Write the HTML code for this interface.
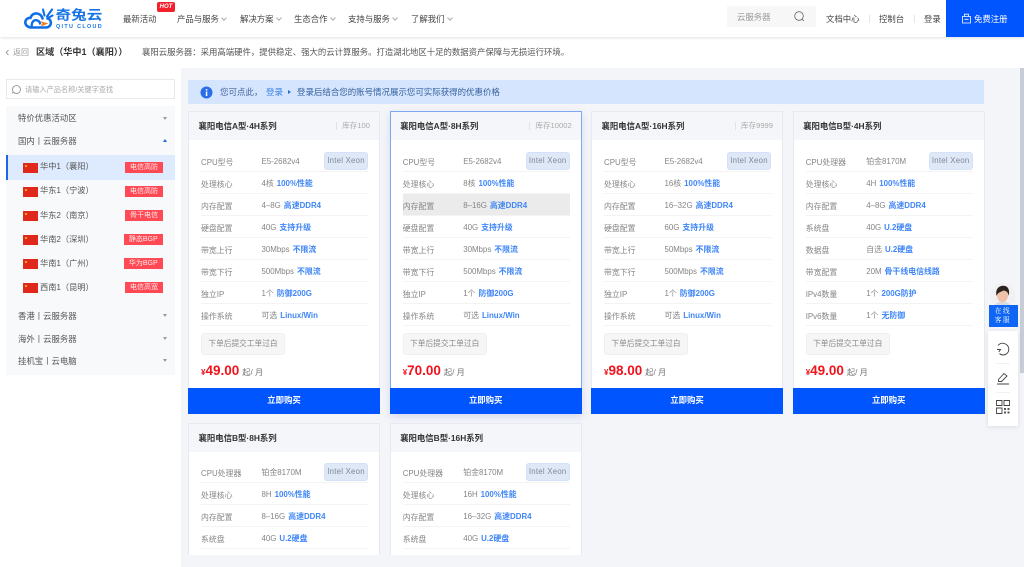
<!DOCTYPE html>
<html lang="zh-CN"><head><meta charset="utf-8"><title>奇兔云</title>
<style>
*{box-sizing:border-box;margin:0;padding:0}
html,body{width:1024px;height:567px;overflow:hidden;background:#fff}
body{font-family:"Liberation Sans","Noto Sans CJK SC",sans-serif;position:relative;color:#555;font-size:8px;filter:blur(.3px)}
.a{position:absolute;white-space:nowrap}
#hd{position:absolute;left:0;top:0;width:1024px;height:37px;background:#fff;box-shadow:0 1px 3px rgba(0,0,0,.12);z-index:5}
.nav{position:absolute;top:13px;font-size:8.4px;line-height:12px;color:#444;white-space:nowrap}
.chev{position:absolute;width:4px;height:4px;border-right:.7px solid #aaa;border-bottom:.7px solid #aaa;transform:rotate(45deg);top:16px}
#main{position:absolute;left:181px;top:68px;width:843px;height:499px;background:#f4f5f9;overflow:hidden}
#sb{position:absolute;left:1020px;top:68px;width:4px;height:305px;background:#c8ccd6}
#notice{position:absolute;left:7px;top:11.5px;width:796px;height:24.5px;background:#d5e5fd}
.card{position:absolute;width:192px;background:#fff;border:1px solid #e7e9f0}
.card.s{border-color:#7fa8f3;box-shadow:0 3px 8px rgba(70,100,180,.18)}
.head{position:absolute;left:0;top:0;width:100%;height:28px;background:#f5f6f9;font-size:8.4px;font-weight:700;line-height:28px;padding-left:9.5px;color:#333;white-space:nowrap}
.stock{position:absolute;right:9px;top:0;font-weight:400;font-size:7.6px;color:#aaa;line-height:28px;padding-left:6px}
.stock:before{content:"";position:absolute;left:0;top:10px;height:8px;border-left:1px solid #e2e2e2}
.rows{position:absolute;left:12px;width:167px}
.r{height:22px;border-bottom:1px solid #f3f3f3;line-height:23px;font-size:7.9px;color:#858585;white-space:nowrap;position:relative}
.r i{font-style:normal;display:inline-block;width:60.5px;position:relative;top:.6px}
.r b{font-weight:700;color:#3f86f7;margin-left:.8px}
.r.h{background:#ebebeb}
.chip{position:absolute;right:0;top:1.5px;width:44px;height:18px;background:#dfe8f7;border:1px solid #d3e1f9;border-radius:3px;text-align:center;line-height:16px;font-size:7.8px;color:#7f8898;font-weight:400;letter-spacing:.25px}
.note{position:absolute;left:12px;top:221px;width:84px;height:22px;background:#f6f6f6;border:1px solid #f0f0f0;border-radius:3px;text-align:center;line-height:20px;font-size:7.7px;color:#8a8a8a;white-space:nowrap}
.price{position:absolute;left:12px;top:249px;color:#f0121c;font-weight:700;font-size:13.5px;line-height:20px;white-space:nowrap}
.price small{font-size:8px;font-weight:700}
.price em{font-style:normal;font-weight:400;font-size:8.2px;color:#777;margin-left:3px;letter-spacing:0}
.buy{position:absolute;left:-1px;top:276px;width:192px;height:25.5px;background:#0055ff;color:#fff;text-align:center;line-height:25px;font-size:8.4px;font-weight:700}
#side{position:absolute;left:6px;top:106px;width:169px;height:269px;background:#f8f9fb}
.sec{position:absolute;left:18px;font-size:8.4px;line-height:12px;color:#555;white-space:nowrap}
.tri{position:absolute;left:163px;width:0;height:0;border-left:2.5px solid transparent;border-right:2.5px solid transparent;border-top:3px solid #999}
.flag{position:absolute;left:23px;width:15px;height:9.5px;background:#e0291b}
.flag:before{content:"";position:absolute;left:2px;top:1.5px;width:2px;height:2px;background:#f7d23c;border-radius:50%}
.reg{position:absolute;left:40px;font-size:8.2px;line-height:12px;color:#555;white-space:nowrap}
.bad{position:absolute;height:11px;background:#ff4a55;color:#fdeaea;font-size:7px;line-height:11px;text-align:center;white-space:nowrap}
</style></head><body>

<div id="hd">
<svg class="a" style="left:22px;top:7px" width="32" height="24" viewBox="0 0 32 24">
<path d="M10 20.500C5 20.500 3.300 17.500 3.300 15.500C3.300 12.500 6 10.500 8.500 10.800C9.500 7.500 12.500 6 15 6.500C18 7 20 9 20.500 11.500M10 20.500H24C27 20.500 29.300 18 28.800 15C28.400 13 27 11.800 25.500 11.500" fill="none" stroke="#0f6fe8" stroke-width="2.600" stroke-linecap="round"/>
<path d="M10 20.500C9 17 10.500 13.500 13.500 13.200C16 13 17.800 14.500 18.300 17.500" fill="none" stroke="#0f6fe8" stroke-width="2.300"/>
<path d="M22.500 8.500L21 2.500M25 9.500L30 2.500M26 11L30.500 8.500" fill="none" stroke="#0f6fe8" stroke-width="2.100" stroke-linecap="round"/>
<path d="M18 14L26.500 16.500L18.500 19.500L20.500 16.500Z" fill="#f47a20"/>
</svg>
<div class="a" style="left:55.500px;top:7px;font-size:15.600px;line-height:18px;font-weight:700;color:#1673e6;transform:scaleY(.82)">奇兔云</div>
<div class="a" style="left:56px;top:23.500px;font-size:5.400px;line-height:6px;font-weight:700;color:#1673e6;letter-spacing:1.350px">QITU CLOUD</div>

<div class="nav" style="left:123px">最新活动</div>
<div class="a" style="left:157px;top:2px;width:18px;height:10px;background:#f3202c;border-radius:2px;color:#fff;font-size:6px;font-weight:700;font-style:italic;text-align:center;line-height:10px">HOT</div>
<div class="nav" style="left:177px">产品与服务</div><div class="chev" style="left:222px"></div>
<div class="nav" style="left:240px">解决方案</div><div class="chev" style="left:277px"></div>
<div class="nav" style="left:294px">生态合作</div><div class="chev" style="left:331px"></div>
<div class="nav" style="left:348px">支持与服务</div><div class="chev" style="left:393px"></div>
<div class="nav" style="left:411px">了解我们</div><div class="chev" style="left:448px"></div>

<div class="a" style="left:727px;top:6px;width:89px;height:21px;background:#f7f7f7"></div>
<div class="nav" style="left:737px;top:11px;color:#999">云服务器</div>
<svg class="a" style="left:793px;top:10px" width="13" height="13" viewBox="0 0 13 13"><circle cx="6" cy="6" r="4.300" fill="none" stroke="#666" stroke-width=".8"/><path d="M9.300 9.300L10.800 10.800" stroke="#666" stroke-width=".9"/></svg>
<div class="nav" style="left:826px">文档中心</div>
<div class="a" style="left:869px;top:15px;height:8px;border-left:1px solid #e6e6e6"></div>
<div class="nav" style="left:879px">控制台</div>
<div class="a" style="left:914px;top:15px;height:8px;border-left:1px solid #e6e6e6"></div>
<div class="nav" style="left:924px">登录</div>
<div class="a" style="left:946px;top:0;width:78px;height:37px;background:#0055ff"></div>
<svg class="a" style="left:961px;top:13px" width="11" height="11" viewBox="0 0 11 11"><path d="M1.500 3.500H9.500V10H1.500ZM3.500 3.500V1.200H7.500V3.500M3.500 6.300H7.500" fill="none" stroke="#fff" stroke-width=".8"/></svg>
<div class="nav" style="left:974px;color:#fff">免费注册</div>
</div>

<svg class="a" style="left:5px;top:49px" width="5" height="7" viewBox="0 0 5 7"><path d="M3.500 1L1.200 3.500L3.500 6" fill="none" stroke="#888" stroke-width=".8"/></svg>
<div class="a" style="left:13px;top:46px;font-size:8px;line-height:13px;color:#999">返回</div>
<div class="a" style="left:36px;top:45px;font-size:9.100px;line-height:14px;font-weight:700;color:#333">区域（华中1（襄阳））</div>
<div class="a" style="left:142px;top:45.500px;font-size:8.400px;line-height:13px;color:#555">襄阳云服务器：采用高端硬件，提供稳定、强大的云计算服务。打造湖北地区十足的数据资产保障与无损运行环境。</div>

<div class="a" style="left:6px;top:79px;width:169px;height:20px;background:#fff;border:1px solid #e9e9e9"></div>
<svg class="a" style="left:11px;top:84px" width="11" height="11" viewBox="0 0 11 11"><circle cx="5.500" cy="5.500" r="4" fill="none" stroke="#888" stroke-width=".8"/><path d="M2 8L1.500 9.500" stroke="#888" stroke-width=".8"/></svg>
<div class="a" style="left:25px;top:84px;font-size:7.200px;line-height:11px;color:#aaa">请输入产品名称/关键字查找</div>

<div id="side"></div>
<div class="a" style="left:6px;top:155px;width:169px;height:25px;background:#deebfe;border-left:2px solid #1d66e8"></div>
<div class="sec" style="top:112px">特价优惠活动区</div><div class="tri" style="top:117px"></div>
<div class="sec" style="top:135px">国内丨云服务器</div><div class="tri" style="top:139px;border-top:0;border-bottom:3px solid #1d66e8"></div>

<div class="flag" style="top:163px"></div><div class="reg" style="top:161px">华中1（襄阳）</div><div class="bad" style="left:125px;width:38px;top:162px">电信高防</div>
<div class="flag" style="top:187px"></div><div class="reg" style="top:185px">华东1（宁波）</div><div class="bad" style="left:125px;width:38px;top:186px">电信高防</div>
<div class="flag" style="top:211px"></div><div class="reg" style="top:209.500px">华东2（南京）</div><div class="bad" style="left:125px;width:38px;top:210px">骨干电信</div>
<div class="flag" style="top:235px"></div><div class="reg" style="top:233.500px">华南2（深圳）</div><div class="bad" style="left:123.500px;width:39.500px;top:234px">静态BGP</div>
<div class="flag" style="top:259px"></div><div class="reg" style="top:257.500px">华南1（广州）</div><div class="bad" style="left:123.500px;width:39.500px;top:258px">华为BGP</div>
<div class="flag" style="top:283px"></div><div class="reg" style="top:281.500px">西南1（昆明）</div><div class="bad" style="left:125px;width:38px;top:282px">电信高宽</div>

<div class="sec" style="top:309.500px">香港丨云服务器</div><div class="tri" style="top:314px"></div>
<div class="sec" style="top:332.500px">海外丨云服务器</div><div class="tri" style="top:337px"></div>
<div class="sec" style="top:355px">挂机宝丨云电脑</div><div class="tri" style="top:359px"></div>

<div id="main">
<div id="notice"></div>
<svg class="a" style="left:19px;top:18px" width="13" height="13" viewBox="0 0 13 13"><circle cx="6.500" cy="6.500" r="6" fill="#2a6ee8"/><rect x="5.800" y="5.500" width="1.500" height="4.500" fill="#fff"/><rect x="5.800" y="3" width="1.500" height="1.500" fill="#fff"/></svg>
<div class="a" style="left:39px;top:17.500px;font-size:8.500px;line-height:13px;color:#44649f">您可点此，</div>
<div class="a" style="left:85px;top:17.500px;font-size:8.500px;line-height:13px;color:#3a80e8">登录</div>
<div class="a" style="left:107px;top:21.500px;width:0;height:0;border-left:3px solid #2f6cd0;border-top:2.500px solid transparent;border-bottom:2.500px solid transparent"></div>
<div class="a" style="left:116px;top:17.500px;font-size:8.460px;line-height:13px;color:#34609f">登录后结合您的账号情况展示您可实际获得的优惠价格</div>

<div class="card" style="left:7px;top:43px;height:303px"><div class="head">襄阳电信A型·4H系列<span class="stock">库存100</span></div>
<div class="rows" style="top:38.400px">
<div class="r"><i>CPU型号</i>E5-2682v4<span class="chip">Intel Xeon</span></div>
<div class="r"><i>处理核心</i>4核 <b>100%性能</b></div>
<div class="r"><i>内存配置</i>4–8G <b>高速DDR4</b></div>
<div class="r"><i>硬盘配置</i>40G <b>支持升级</b></div>
<div class="r"><i>带宽上行</i>30Mbps <b>不限流</b></div>
<div class="r"><i>带宽下行</i>500Mbps <b>不限流</b></div>
<div class="r"><i>独立IP</i>1个 <b>防御200G</b></div>
<div class="r"><i>操作系统</i>可选 <b>Linux/Win</b></div></div>
<div class="note">下单后提交工单过白</div><div class="price"><small>¥</small>49.00<em>起/ 月</em></div><div class="buy">立即购买</div></div>

<div class="card s" style="left:208.700px;top:43px;height:303px"><div class="head">襄阳电信A型·8H系列<span class="stock">库存10002</span></div>
<div class="rows" style="top:38.400px">
<div class="r"><i>CPU型号</i>E5-2682v4<span class="chip">Intel Xeon</span></div>
<div class="r"><i>处理核心</i>8核 <b>100%性能</b></div>
<div class="r h"><i>内存配置</i>8–16G <b>高速DDR4</b></div>
<div class="r"><i>硬盘配置</i>40G <b>支持升级</b></div>
<div class="r"><i>带宽上行</i>30Mbps <b>不限流</b></div>
<div class="r"><i>带宽下行</i>500Mbps <b>不限流</b></div>
<div class="r"><i>独立IP</i>1个 <b>防御200G</b></div>
<div class="r"><i>操作系统</i>可选 <b>Linux/Win</b></div></div>
<div class="note">下单后提交工单过白</div><div class="price"><small>¥</small>70.00<em>起/ 月</em></div><div class="buy">立即购买</div></div>

<div class="card" style="left:410px;top:43px;height:303px"><div class="head">襄阳电信A型·16H系列<span class="stock">库存9999</span></div>
<div class="rows" style="top:38.400px">
<div class="r"><i>CPU型号</i>E5-2682v4<span class="chip">Intel Xeon</span></div>
<div class="r"><i>处理核心</i>16核 <b>100%性能</b></div>
<div class="r"><i>内存配置</i>16–32G <b>高速DDR4</b></div>
<div class="r"><i>硬盘配置</i>60G <b>支持升级</b></div>
<div class="r"><i>带宽上行</i>50Mbps <b>不限流</b></div>
<div class="r"><i>带宽下行</i>500Mbps <b>不限流</b></div>
<div class="r"><i>独立IP</i>1个 <b>防御200G</b></div>
<div class="r"><i>操作系统</i>可选 <b>Linux/Win</b></div></div>
<div class="note">下单后提交工单过白</div><div class="price"><small>¥</small>98.00<em>起/ 月</em></div><div class="buy">立即购买</div></div>

<div class="card" style="left:611.700px;top:43px;height:303px"><div class="head">襄阳电信B型·4H系列</div>
<div class="rows" style="top:38.400px">
<div class="r"><i>CPU处理器</i>铂金8170M<span class="chip">Intel Xeon</span></div>
<div class="r"><i>处理核心</i>4H <b>100%性能</b></div>
<div class="r"><i>内存配置</i>4–8G <b>高速DDR4</b></div>
<div class="r"><i>系统盘</i>40G <b>U.2硬盘</b></div>
<div class="r"><i>数据盘</i>自选 <b>U.2硬盘</b></div>
<div class="r"><i>带宽配置</i>20M <b>骨干线电信线路</b></div>
<div class="r"><i>IPv4数量</i>1个 <b>200G防护</b></div>
<div class="r"><i>IPv6数量</i>1个 <b>无防御</b></div></div>
<div class="note">下单后提交工单过白</div><div class="price"><small>¥</small>49.00<em>起/ 月</em></div><div class="buy">立即购买</div></div>

<div class="card" style="left:7px;top:355px;height:132px;overflow:hidden;border-bottom:0"><div class="head">襄阳电信B型·8H系列</div>
<div class="rows" style="top:37.300px">
<div class="r"><i>CPU处理器</i>铂金8170M<span class="chip">Intel Xeon</span></div>
<div class="r"><i>处理核心</i>8H <b>100%性能</b></div>
<div class="r"><i>内存配置</i>8–16G <b>高速DDR4</b></div>
<div class="r"><i>系统盘</i>40G <b>U.2硬盘</b></div></div></div>

<div class="card" style="left:208.700px;top:355px;height:132px;overflow:hidden;border-bottom:0"><div class="head">襄阳电信B型·16H系列</div>
<div class="rows" style="top:37.300px">
<div class="r"><i>CPU处理器</i>铂金8170M<span class="chip">Intel Xeon</span></div>
<div class="r"><i>处理核心</i>16H <b>100%性能</b></div>
<div class="r"><i>内存配置</i>16–32G <b>高速DDR4</b></div>
<div class="r"><i>系统盘</i>40G <b>U.2硬盘</b></div></div></div>
</div>
<div id="sb"></div>

<svg class="a" style="left:988px;top:283px" width="30" height="24" viewBox="0 0 30 24"><circle cx="14.500" cy="13" r="13" fill="#f1f1f3"/><path d="M6 24C7 19.500 11 18.500 14.500 18.500C18 18.500 22 19.500 23 24Z" fill="#d9dbe2"/><ellipse cx="14.500" cy="12.500" rx="5.500" ry="6.800" fill="#eec2a8"/><path d="M8.500 13C7 5 12 2.800 15 2.800C20 2.800 22 6.500 20.800 13C20 9 18.500 8 15.500 7.500C13 9 10 9 8.500 13Z" fill="#2b211f"/></svg>
<div class="a" style="left:988.500px;top:305px;width:29px;height:22px;background:#0f66f5;color:#fff;font-family:'Liberation Serif','Noto Serif CJK SC',serif;font-size:6.600px;line-height:9.500px;text-align:center;letter-spacing:1.500px;padding-top:1.500px;white-space:normal">在线<br>客服</div>
<div class="a" style="left:988px;top:331px;width:30px;height:95px;background:#fff;box-shadow:0 1px 5px rgba(0,0,0,.1)"></div>
<div class="a" style="left:996px;top:362.500px;width:14px;border-top:1px solid #f1f1f1"></div>
<div class="a" style="left:996px;top:391.500px;width:14px;border-top:1px solid #f1f1f1"></div>
<svg class="a" style="left:995px;top:341px" width="16" height="16" viewBox="0 0 16 16"><path d="M3 4.500C4.500 2.800 6.500 2 8.500 2.300C11.500 2.700 13.800 5.200 13.800 8.200C13.800 11.500 11.300 14 8.300 14C6.800 14 5.500 13.500 4.500 12.500M2 8.500H5.500L3.800 11" fill="none" stroke="#444" stroke-width=".9"/></svg>
<svg class="a" style="left:995px;top:370px" width="16" height="16" viewBox="0 0 16 16"><path d="M3.500 9.500L9 3.500L12 6L6.500 11.500H3.500ZM2 14H14" fill="none" stroke="#444" stroke-width=".9"/></svg>
<svg class="a" style="left:995px;top:399px" width="16" height="16" viewBox="0 0 16 16"><path d="M1.500 1.500H7V6.500H1.500ZM9 1.500H14.500V6.500H9ZM1.500 9H7V14.500H1.500Z" fill="none" stroke="#444" stroke-width=".9"/><path d="M9 9H11V11H9ZM12.500 9H14.500V11H12.500ZM9 12.500H11V14.500H9ZM12.500 12.500H14.500V14.500H12.500Z" fill="#555"/></svg>
</body></html>
